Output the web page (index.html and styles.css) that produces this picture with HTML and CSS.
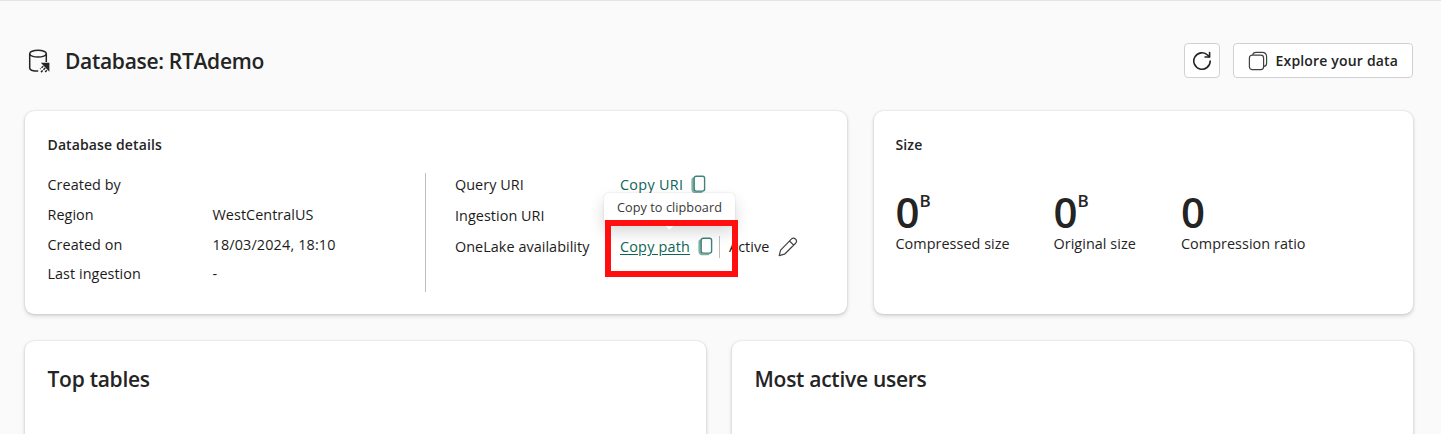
FILE: index.html
```html
<!DOCTYPE html>
<html lang="en">
<head>
<meta charset="utf-8">
<title>Database: RTAdemo</title>
<link rel="stylesheet" href="styles.css">
</head>
<body>
<svg width="0" height="0" class="defs">
  <symbol id="copy" viewBox="0 0 16 20">
    <path d="M3.500 1.900C1.300 2.200.4 3.300.4 5.300v8.800c0 2.700 1.300 4.200 4 4.200h4.600c1.500 0 2.500-.6 2.900-1.900H4.800a2 2 0 0 1-2-2z" fill="currentColor" opacity=".65"/>
    <rect x="3.200" y="1.200" width="10.400" height="14.900" rx="2" fill="#fff" stroke="currentColor" stroke-width="1.400"/>
  </symbol>
</svg>
<main class="page">
  <header class="header">
    <svg class="db-icon" viewBox="0 0 22 24" width="22" height="24" fill="none" stroke="#242424" stroke-width="1.500">
      <ellipse cx="10" cy="4.700" rx="8.300" ry="3.400"/>
      <path d="M1.700 4.700v14.200c0 1.900 3 3.100 8.500 3.200M18.300 4.700v8.300"/>
      <path d="M12.800 13.800h8.600v8.900z" fill="#242424" stroke="none"/>
      <path d="M15.300 17.200l-3.200 2.700M17.200 19l-4.500 4.400M18.800 21.100l-2 2.500" stroke-dasharray="2.400 1.100"/>
    </svg>
    <h1 class="title">Database: RTAdemo</h1>
    <div class="actions">
      <button class="btn btn-icon" aria-label="Refresh">
        <svg viewBox="0 0 20 20" width="20" height="20" fill="none" stroke="#242424" stroke-width="1.600" stroke-linecap="round" stroke-linejoin="round">
          <path d="M18.200 10A8.200 8.200 0 1 1 15.800 4.200L17.400 5.800"/><path d="M17.600 1.500v4.500h-4.500"/>
        </svg>
      </button>
      <button class="btn btn-explore">
        <svg viewBox="0 0 20 20" width="20" height="20" fill="none" stroke="#424242" stroke-width="1.200">
          <rect x="1.400" y="4.200" width="14.200" height="14.400" rx="2.800"/>
          <path d="M4.800 4C5 2.400 6.200 1.400 8 1.400h6c3.200 0 4.600 1.400 4.600 4.600v6.200c0 1.800-1 3-2.800 3.200"/>
        </svg>
        <span>Explore your data</span>
      </button>
    </div>
  </header>

  <div class="row row-top">
    <section class="card details">
      <h2 class="label">Database details</h2>
      <div class="details-body">
        <dl class="facts facts-left">
          <dt>Created by</dt><dd></dd>
          <dt>Region</dt><dd>WestCentralUS</dd>
          <dt>Created on</dt><dd class="date">18/03/2024, 18:10</dd>
          <dt>Last ingestion</dt><dd>-</dd>
        </dl>
        <dl class="facts facts-right">
          <dt>Query URI</dt>
          <dd><a class="link uri">Copy URI</a><svg class="copy" width="16" height="20"><use href="#copy"/></svg></dd>
          <dt>Ingestion URI</dt><dd></dd>
          <dt>OneLake availability</dt>
          <dd class="path-cell">
            <a class="link underlined">Copy path</a><svg class="copy" width="16" height="20"><use href="#copy"/></svg>
            <span class="sep"></span><span class="active">Active</span>
            <svg class="pencil" viewBox="0 0 20 20" width="20" height="20" fill="none" stroke="#424242" stroke-width="1.200" stroke-linejoin="round">
              <path d="M13.300 2.200a2.850 2.850 0 0 1 4.300 4L6.500 17.200 1.200 18.600 2.600 13.100zM11.500 4l4.200 4.200"/>
            </svg>
            <span class="tooltip">Copy to clipboard</span>
            <span class="highlight"></span>
          </dd>
        </dl>
      </div>
    </section>
    <section class="card size">
      <h2 class="label">Size</h2>
      <div class="metrics">
        <div class="metric m1"><div class="value">0<span class="unit">B</span></div><div class="caption">Compressed size</div></div>
        <div class="metric m2"><div class="value">0<span class="unit">B</span></div><div class="caption">Original size</div></div>
        <div class="metric"><div class="value">0</div><div class="caption">Compression ratio</div></div>
      </div>
    </section>
  </div>

  <div class="row row-bottom">
    <section class="card list"><h2 class="heading">Top tables</h2></section>
    <section class="card list"><h2 class="heading">Most active users</h2></section>
  </div>
</main>
</body>
</html>
```
FILE: styles.css
```css
* { box-sizing: border-box; }
body { margin: 0; background: #fafafa; font-family: "Open Sans", "Noto Sans", sans-serif; font-size: 14px; line-height: 20px; color: #242424; }
h1, h2, dl, dt, dd { margin: 0; font-weight: 400; }
.defs { display: block; }
.page { height: 434px; overflow: hidden; border-top: 1px solid #e4e4e4; padding: 42px 28px 0 25px; }
.header { display: flex; align-items: center; height: 35px; }
.db-icon { margin: 0 0 0 3px; }
.title { font-size: 21px; line-height: 28px; font-weight: 600; margin-left: 15px; letter-spacing: -0.3px; white-space: nowrap; }
.actions { display: flex; gap: 13px; margin-left: auto; }
.btn { height: 35px; background: #fff; border: 1px solid #d1d1d1; border-radius: 4px; padding: 0; display: flex; align-items: center; justify-content: center; font: 600 14px/20px "Open Sans", sans-serif; color: #242424; white-space: nowrap; }
.btn-icon { width: 36px; }
.btn-explore { width: 180px; gap: 7.500px; padding-left: 14px; justify-content: flex-start; letter-spacing: 0.18px; }
.btn-explore span { padding-top: 1px; }
.row { display: grid; }
.row-top { grid-template-columns: 822px 539px; gap: 27px; margin-top: 33px; }
.row-bottom { grid-template-columns: 681px 681px; gap: 26px; margin-top: 27px; }
.card { background: #fff; border-radius: 9px; box-shadow: 0 0 2px rgba(0,0,0,.16), 0 2px 4px rgba(0,0,0,.16); padding: 24px 22.5px; }
.row-top .card { height: 203px; }
.row-bottom .card { height: 140px; }
.label { font-size: 14px; line-height: 20px; font-weight: 600; letter-spacing: 0.120px; }
.details-body { display: flex; margin-top: 18px; }
.facts { display: grid; color: #1b1b1b; white-space: nowrap; align-content: start; font-size: 14.400px; letter-spacing: 0.050px; }
.facts-left { grid-template-columns: 165px 212px; grid-auto-rows: 29.800px; width: 378px; height: 119px; padding-top: 2px; border-right: 1px solid #bdbdbd; }
.facts-right { grid-template-columns: 165px auto; grid-auto-rows: 31px; padding: 2px 0 0 29.500px; }
.facts-right dd { display: flex; height: 20px; }
.date { letter-spacing: 0.150px; }
.link { color: #0e6557; }
.underlined { text-decoration: underline; text-underline-offset: 2px; width: 70px; letter-spacing: 0.2px; }
.uri { width: 63px; letter-spacing: 0.300px; }
.copy { color: #3e8478; margin-left: 8px; flex: none; }
.path-cell { position: relative; }
.sep { width: 1px; height: 22px; margin: -1px 9px 0 5px; background: #bdbdbd; }
.active { width: 41px; }
.pencil { margin-left: 8px; }
.tooltip { position: absolute; left: -16px; top: -44px; width: 131px; height: 31px; padding: 4px 0 0 13px; background: #fff; border-radius: 5px; font-size: 12.700px; color: #383838; box-shadow: 0 0 2px rgba(0,0,0,.14), 0 8px 16px rgba(0,0,0,.16); }
.tooltip::after { content: ""; position: absolute; left: 61px; bottom: -4px; width: 9px; height: 9px; background: #fff; transform: rotate(45deg); }
.highlight { position: absolute; left: -15px; top: -17px; width: 133px; height: 57px; border: 6px solid #ff0f0f; }
.size { padding-left: 21.500px; }
.metrics { display: flex; margin-top: 36px; }
.m1 { width: 158px; }
.m2 { width: 127.500px; }
.metric { white-space: nowrap; }
.value { display: flex; height: 43px; font-size: 42px; line-height: 42px; font-weight: 600; }
.unit { font-size: 17px; line-height: 20px; }
.caption { font-size: 14.400px; line-height: 20px; letter-spacing: 0.050px; }
.heading { font-size: 21px; line-height: 28px; font-weight: 600; letter-spacing: -0.270px; }
```
